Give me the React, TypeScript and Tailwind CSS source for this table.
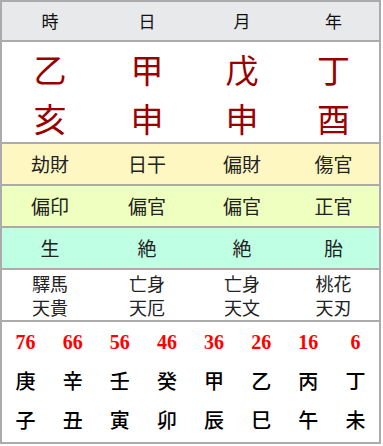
const cols = "grid grid-cols-[96px_98px_92px_1fr]";

const pillars = [
  { label: "時", stem: "乙", branch: "亥", god: "劫財", branchGod: "偏印", stage: "生", stars: ["驛馬", "天貴"] },
  { label: "日", stem: "甲", branch: "申", god: "日干", branchGod: "偏官", stage: "絶", stars: ["亡身", "天厄"] },
  { label: "月", stem: "戊", branch: "申", god: "偏財", branchGod: "偏官", stage: "絶", stars: ["亡身", "天文"] },
  { label: "年", stem: "丁", branch: "酉", god: "傷官", branchGod: "正官", stage: "胎", stars: ["桃花", "天刃"] },
];

const daeun = [
  { age: 76, stem: "庚", branch: "子" },
  { age: 66, stem: "辛", branch: "丑" },
  { age: 56, stem: "壬", branch: "寅" },
  { age: 46, stem: "癸", branch: "卯" },
  { age: 36, stem: "甲", branch: "辰" },
  { age: 26, stem: "乙", branch: "巳" },
  { age: 16, stem: "丙", branch: "午" },
  { age: 6, stem: "丁", branch: "未" },
];

function BandRow({ items, bg }: { items: string[]; bg: string }) {
  return (
    <div className={`${cols} h-[42px] border-t-2 border-[#ababab] ${bg}`}>
      {items.map((t, i) => (
        <div key={i} className="flex items-center justify-center text-[19px] text-[#222]">
          {t}
        </div>
      ))}
    </div>
  );
}

export default function App() {
  return (
    <div
      className="w-[381px] border-2 border-[#ababab] bg-white"
      style={{ fontFamily: '"Noto Sans CJK JP", "Noto Sans CJK TC", sans-serif' }}
    >
      <div className={`${cols} h-[38px] bg-[#e7e9eb]`}>
        {pillars.map((p) => (
          <div key={p.label} className="flex items-center justify-center text-[17px] text-[#111]">
            {p.label}
          </div>
        ))}
      </div>

      <div className={`${cols} h-[102px] border-t-2 border-[#ababab] text-[33px] leading-none text-[#990000]`}>
        {pillars.map((p) => (
          <div key={p.label} className="flex flex-col items-center pt-[5px]">
            <span className="h-[51px] leading-[44px]">{p.stem}</span>
            <span className="leading-[40px]">{p.branch}</span>
          </div>
        ))}
      </div>

      <BandRow items={pillars.map((p) => p.god)} bg="bg-[#fff7c2]" />
      <BandRow items={pillars.map((p) => p.branchGod)} bg="bg-[#eeffc0]" />
      <BandRow items={pillars.map((p) => p.stage)} bg="bg-[#bfffe3]" />

      <div className={`${cols} h-[52px] border-t-2 border-[#ababab] text-[18px] leading-[24px] text-[#222]`}>
        {pillars.map((p) => (
          <div key={p.label} className="flex flex-col items-center justify-center">
            <span className="block h-[24px] overflow-hidden">{p.stars[0]}</span>
            <span className="block h-[24px] overflow-hidden">{p.stars[1]}</span>
          </div>
        ))}
      </div>

      <div className="grid h-[122px] grid-cols-8 grid-rows-3 border-t-2 border-[#ababab] pb-[2px]">
        {daeun.map((d) => (
          <div
            key={"a" + d.age}
            className="flex items-center justify-center text-[20px] font-bold text-[#ff0000]"
            style={{ fontFamily: '"Liberation Serif", serif' }}
          >
            {d.age}
          </div>
        ))}
        {daeun.map((d) => (
          <div key={"s" + d.age} className="flex items-center justify-center text-[20px] font-medium text-black">
            {d.stem}
          </div>
        ))}
        {daeun.map((d) => (
          <div key={"b" + d.age} className="flex items-center justify-center text-[20px] font-medium text-black">
            {d.branch}
          </div>
        ))}
      </div>
    </div>
  );
}
